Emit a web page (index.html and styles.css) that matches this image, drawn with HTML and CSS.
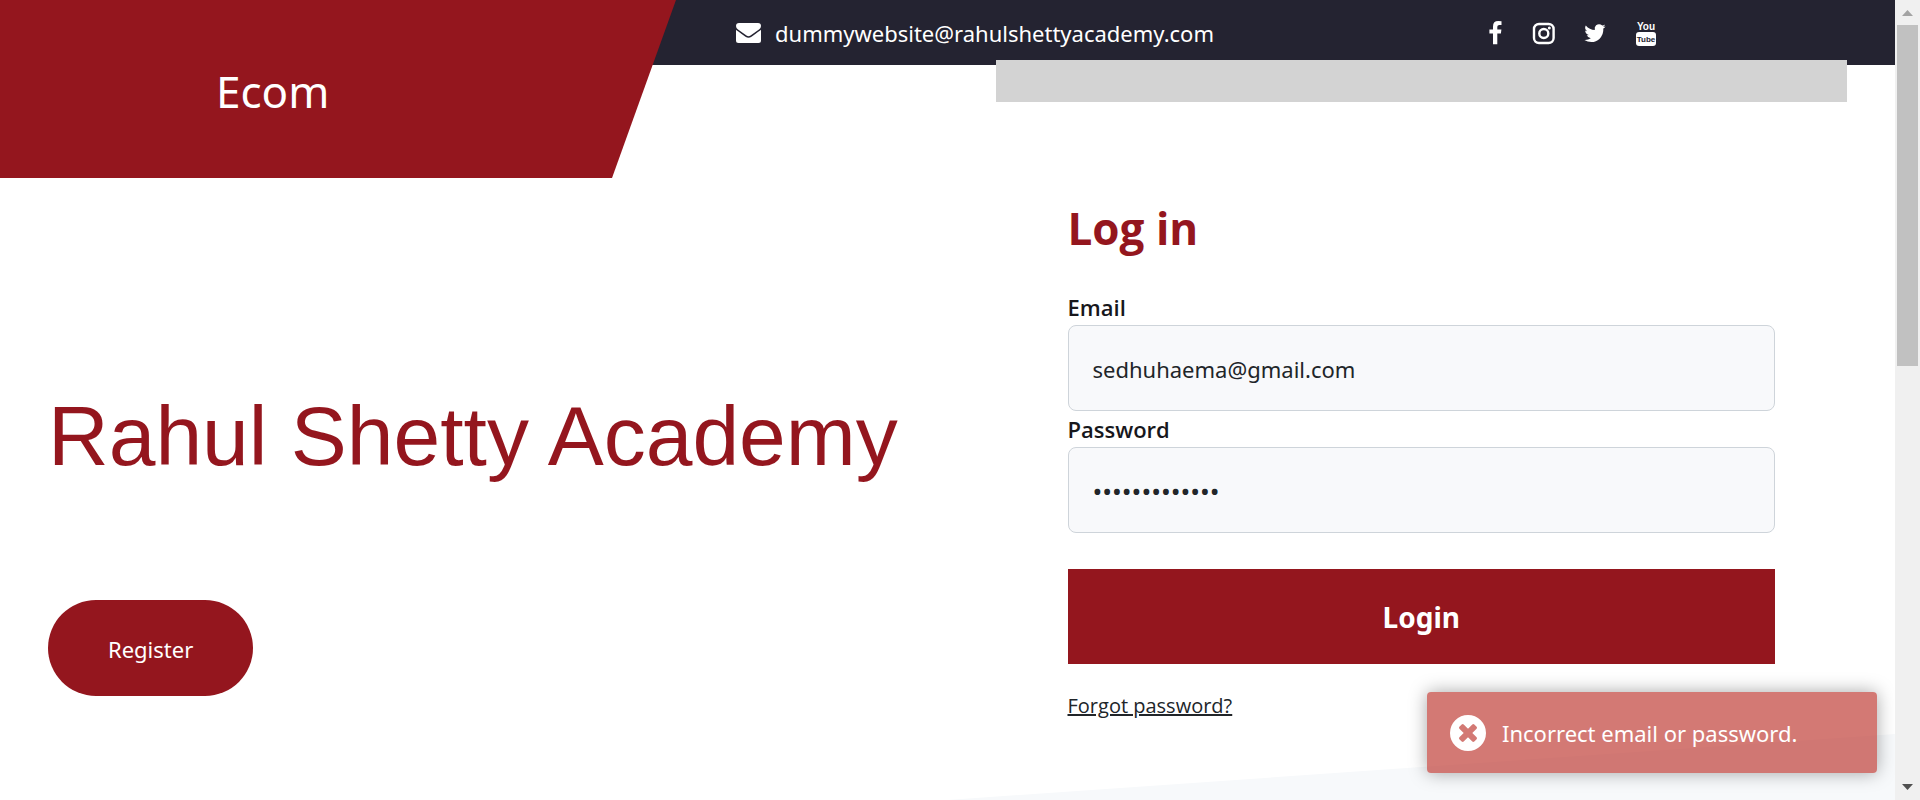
FILE: index.html
```html
<!DOCTYPE html>
<html lang="en">
<head>
<meta charset="utf-8">
<title>Ecom - Log in</title>
<link rel="stylesheet" href="styles.css">
</head>
<body>
<div class="page">
  <header class="header">
    <div class="topbar">
      <a class="contact" href="mailto:dummywebsite@rahulshettyacademy.com">
        <svg class="contact-icon" viewBox="0 0 25 20" aria-hidden="true"><path fill="currentColor" d="M0 3Q0 0 3 0H22Q25 0 25 3Q25 5 23 6.500L14.500 12.600Q12.500 14 10.500 12.600L2 6.500Q0 5 0 3ZM0 6.700Q.7 7.400 9.500 13.700Q12.500 15.800 15.500 13.700Q24.300 7.400 25 6.700V17.500Q25 20 22.500 20H2.500Q0 20 0 17.500Z"/></svg>
        <span>dummywebsite@rahulshettyacademy.com</span>
      </a>
      <nav class="social" aria-label="Social media">
        <a href="#" aria-label="Facebook"><svg class="social-icon" viewBox="0 0 26 26"><path fill="currentColor" d="M21.500 1.200V4.900H19.300Q17.300 4.900 17.300 6.800V9.500H21.400L20.900 13.600H17.300V24.200H13V13.600H9.400V9.500H13V6.400Q13 1 18.300 1Q20.600 1 21.500 1.200Z"/></svg></a>
        <a href="#" aria-label="Instagram"><svg class="social-icon" viewBox="0 0 26 26"><rect x="3" y="4" width="19.600" height="19" rx="5" fill="none" stroke="currentColor" stroke-width="2.400"/><circle cx="12.800" cy="13.500" r="4.500" fill="none" stroke="currentColor" stroke-width="2.400"/><circle cx="18.300" cy="8" r="1.500" fill="currentColor"/></svg></a>
        <a href="#" aria-label="Twitter"><svg class="social-icon" viewBox="0 0 26 26"><path fill="currentColor" d="M23.500 6.400Q22.600 7.700 21.300 8.600Q21.800 14.500 17.400 18.900Q14.200 22 9.400 22Q5.500 22 2.400 20Q6 20.200 8.800 18.200Q5.800 18 4.700 15.100Q5.700 15.300 6.700 15Q3.200 14 3.200 10.600Q4.200 11.200 5.200 11.200Q1.900 8.700 3.800 5.400Q7.500 9.700 12.800 9.900Q12.200 6.700 14.100 5.200Q17.300 2.900 20.300 5.600Q21.800 5.300 23.100 4.500Q22.600 6 21.200 6.900Q22.400 6.800 23.500 6.400Z"/></svg></a>
        <a href="#" aria-label="YouTube"><svg class="social-icon" viewBox="0 0 26 26"><text class="yt-you" x="13" y="10" text-anchor="middle">You</text><rect x="3" y="12" width="20" height="14" rx="3" fill="currentColor"/><text class="yt-tube" x="13" y="22" text-anchor="middle">Tube</text></svg></a>
      </nav>
    </div>
    <div class="logo"><a class="logo-link" href="#">Ecom</a></div>
    <div class="notice"></div>
  </header>

  <main class="main">
    <section class="intro">
      <h1 class="intro-title">Rahul Shetty Academy</h1>
      <button class="register" type="button">Register</button>
    </section>
    <section class="login">
      <h2 class="login-title">Log in</h2>
      <form class="login-form">
        <label class="label" for="email">Email</label>
        <input class="field" id="email" type="email" value="sedhuhaema@gmail.com">
        <label class="label" for="password">Password</label>
        <input class="field field-password" id="password" type="password" value="abcdefghijklm">
        <button class="submit" type="submit">Login</button>
      </form>
      <a class="forgot" href="#">Forgot password?</a>
    </section>
  </main>
  <div class="slope"></div>

  <div class="toast" role="alert">
    <svg class="toast-icon" viewBox="0 0 36 36" aria-hidden="true"><path fill="currentColor" fill-rule="evenodd" d="M18 0A18 18 0 1 1 18 36A18 18 0 1 1 18 0ZM18 13.700L13.700 9.400Q12.700 8.500 11.700 9.400L9.400 11.700Q8.500 12.700 9.400 13.700L13.700 18L9.400 22.300Q8.500 23.300 9.400 24.300L11.700 26.600Q12.700 27.500 13.700 26.600L18 22.300L22.300 26.600Q23.300 27.500 24.300 26.600L26.600 24.300Q27.500 23.300 26.600 22.300L22.300 18L26.600 13.700Q27.500 12.700 26.600 11.700L24.300 9.400Q23.300 8.500 22.300 9.400Z"/></svg>
    <span>Incorrect email or password.</span>
  </div>
</div>
<div class="scrollbar" aria-hidden="true">
  <svg class="scroll-arrow" viewBox="0 0 25 25"><path fill="#a3a3a3" d="M7 16L12.500 10L18 16Z"/></svg>
  <div class="scroll-thumb"></div>
  <svg class="scroll-arrow scroll-down" viewBox="0 0 25 25"><path fill="#505050" d="M7 9L12.500 15L18 9Z"/></svg>
</div>
</body>
</html>
```
FILE: styles.css
```css
* { box-sizing: border-box; }

body {
  margin: 0;
  display: grid;
  grid-template-columns: minmax(0, 1fr) 25px;
  min-height: 100vh;
  background: #fff;
  color: #212529;
  font-family: "Noto Sans", "Open Sans", sans-serif;
  font-size: 22px;
  line-height: 36px;
}

a { color: inherit; text-decoration: none; }
button, input { font: inherit; }

.page {
  position: relative;
  overflow: hidden;
}

/* Header */
.header {
  position: relative;
  display: grid;
  grid-template-columns: 676px minmax(0, 1fr);
  align-items: start;
}

.topbar {
  grid-area: 1 / 1 / 2 / 3;
  display: flex;
  align-items: center;
  justify-content: space-between;
  height: 65px;
  padding: 0 236px 0 736px;
  background: #242331;
  color: #fff;
}

.contact { display: flex; align-items: center; gap: 14px; }
.contact-icon { width: 25px; height: 20px; }
.social { display: flex; gap: 25px; }
.social a { display: flex; }
.social-icon { width: 26px; height: 26px; }

.yt-you, .yt-tube {
  font-family: "Liberation Sans Narrow", "Liberation Sans", sans-serif;
  font-weight: 700;
}
.yt-you { fill: #fff; font-size: 10px; }
.yt-tube { fill: #242331; font-size: 8px; }

.logo {
  grid-area: 1 / 1;
  display: flex;
  align-items: center;
  height: 178px;
  padding: 4px 0 0 216px;
  background: #94161e;
  color: #fff;
  clip-path: polygon(0 0, 100% 0, calc(100% - 64px) 100%, 0 100%);
}
.logo-link { font-size: 44px; line-height: 60px; }

.notice {
  position: absolute;
  top: 60px;
  left: calc(50% + 48px);
  right: 48px;
  height: 42px;
  background: #d3d3d3;
}

/* Main columns */
.main {
  position: relative;
  z-index: 1;
  display: grid;
  grid-template-columns: 1fr 1fr;
}

.intro {
  padding: 208px 0 0 48px;
}
.intro-title {
  margin: 0 0 114px;
  color: #94161e;
  font: 400 84px/100px "Liberation Sans", Arial, sans-serif;
  white-space: nowrap;
}
.register {
  height: 96px;
  padding: 2px 60px 0;
  border: 0;
  border-radius: 48px;
  background: #94161e;
  color: #fff;
}

.login {
  padding: 20px 120px 0;
}
.login-title {
  margin: 0 0 31px;
  color: #94161e;
  font-family: "Open Sans", "Noto Sans", sans-serif;
  font-size: 44px;
  font-weight: 700;
  line-height: 60px;
}
.login-form { display: flex; flex-direction: column; }
.label {
  color: #17171c;
  font-family: "Open Sans", "Noto Sans", sans-serif;
  font-weight: 600;
}
.field {
  width: 100%;
  height: 86px;
  padding: 2px 24px 0;
  border: 1px solid #ced4da;
  border-radius: 8px;
  background: #f8f9fb;
  color: #212529;
}
.field-password { font-size: 26px; }
.submit {
  height: 95px;
  margin: 36px 0 22px;
  padding: 0;
  border: 0;
  background: #94161e;
  color: #fff;
  font-size: 28px;
  font-weight: 700;
}
.forgot {
  font-family: "Open Sans", "Noto Sans", sans-serif;
  font-size: 20px;
  text-decoration: underline;
  text-decoration-thickness: 2px;
}

.slope {
  position: absolute;
  bottom: 0;
  left: 50%;
  right: 0;
  height: 66px;
  background: #f7f9fb;
  clip-path: polygon(0 100%, 100% 0, 100% 100%);
}

/* Toast */
.toast {
  position: absolute;
  z-index: 2;
  right: 18px;
  bottom: 27px;
  display: flex;
  align-items: center;
  gap: 16px;
  width: 450px;
  height: 81px;
  padding: 0 23px;
  border-radius: 4px;
  background: #bd362faa;
  box-shadow: 0 0 18px #00000059;
  color: #fff;
}
.toast-icon { width: 36px; height: 36px; }

/* Scrollbar */
.scrollbar {
  display: flex;
  flex-direction: column;
  align-items: center;
  height: 100vh;
  position: sticky;
  top: 0;
  background: #f0f0f0;
}
.scroll-arrow { width: 25px; height: 25px; flex: none; }
.scroll-down { margin-top: auto; }
.scroll-thumb { width: 21px; height: 341px; background: #c1c1c1; }
```
